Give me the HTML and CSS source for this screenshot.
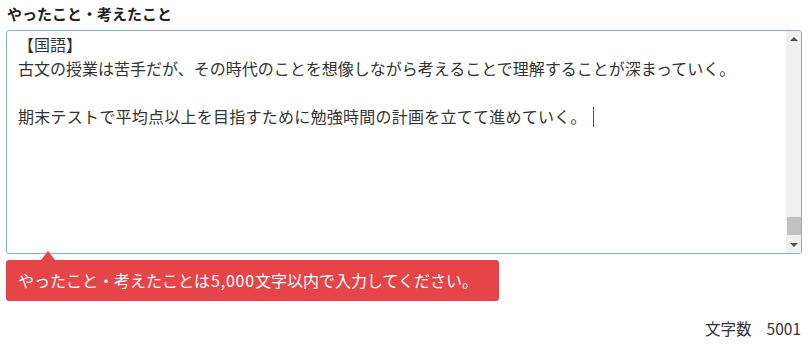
FILE: index.html
```html
<!DOCTYPE html>
<html lang="ja">
<head>
<meta charset="utf-8">
<title>やったこと・考えたこと</title>
<link rel="stylesheet" href="styles.css">
</head>
<body>
<div class="field">
  <div class="label">やったこと・考えたこと</div>
  <div class="textarea">
    <div class="text">
      <div class="line">【国語】</div>
      <div class="line">古文の授業は苦手だが、その時代のことを想像しながら考えることで理解することが深まっていく。</div>
      <div class="line">&nbsp;</div>
      <div class="line wide">期末テストで平均点以上を目指すために勉強時間の計画を立てて進めていく。<span class="caret"></span></div>
    </div>
    <div class="scrollbar">
      <div class="sb-btn"><span class="arrow-up"></span></div>
      <div class="sb-track"><div class="sb-thumb"></div></div>
      <div class="sb-btn"><span class="arrow-down"></span></div>
    </div>
  </div>
  <div class="tooltip-row">
    <div class="tooltip">やったこと・考えたことは<span class="num">5,000</span>文字以内で入力してください。</div>
  </div>
  <div class="counter"><span class="counter-label">文字数</span><span class="counter-num">5001</span></div>
</div>
</body>
</html>
```
FILE: styles.css
```css
* { box-sizing: border-box; }
html, body { margin: 0; padding: 0; background: #fff; }
body {
  font-family: "Noto Sans CJK JP", "Noto Sans", sans-serif;
  color: #333;
}
.field {
  width: 802px;
  padding-left: 6px;
}
.label {
  font-size: 15px;
  font-weight: bold;
  line-height: 20px;
  padding-top: 4px;
  padding-left: 1px;
  margin-bottom: 6px;
  color: #222;
}
.textarea {
  height: 224px;
  border: 1px solid #86aade;
  border-radius: 3px;
  display: flex;
  overflow: hidden;
  background: #fff;
}
.text {
  flex: 1;
  padding: 1px 0 0 11px;
  font-size: 16px;
  line-height: 24px;
  color: #333;
  overflow: hidden;
  white-space: nowrap;
}
.line.wide { letter-spacing: 0.25px; }
.caret {
  display: inline-block;
  width: 1px;
  height: 20px;
  background: #555;
  vertical-align: -4px;
  margin-left: 6px;
}
.scrollbar {
  width: 15px;
  background: #f0f0f0;
  display: flex;
  flex-direction: column;
}
.sb-btn {
  height: 16px;
  display: flex;
  align-items: center;
  justify-content: center;
}
.arrow-up {
  width: 0; height: 0;
  border-left: 4px solid transparent;
  border-right: 4px solid transparent;
  border-bottom: 4px solid #505050;
}
.arrow-down {
  width: 0; height: 0;
  border-left: 4px solid transparent;
  border-right: 4px solid transparent;
  border-top: 4px solid #505050;
}
.sb-track {
  flex: 1;
  display: flex;
  flex-direction: column;
  justify-content: flex-end;
  padding-bottom: 2px;
}
.sb-thumb {
  height: 18px;
  margin-left: 1px;
  background: #c1c1c1;
}
.tooltip-row {
  margin-top: 6px;
  display: flex;
}
.tooltip {
  position: relative;
  background: #e54549;
  color: #fff;
  font-size: 16px;
  height: 41px;
  line-height: 41px;
  padding: 0 21px 0 12px;
  border-radius: 3px;
  white-space: nowrap;
}
.tooltip .num {
  letter-spacing: 0.8px;
  padding: 0 0 0 1px;
}
.tooltip::before {
  content: "";
  position: absolute;
  left: 35px;
  top: -9px;
  border-left: 7px solid transparent;
  border-right: 7px solid transparent;
  border-bottom: 9px solid #e54549;
}
.counter {
  margin-top: 17px;
  display: flex;
  justify-content: flex-end;
  gap: 15px;
  font-size: 15.5px;
  line-height: 20px;
  padding-right: 1px;
  color: #333;
}
```
